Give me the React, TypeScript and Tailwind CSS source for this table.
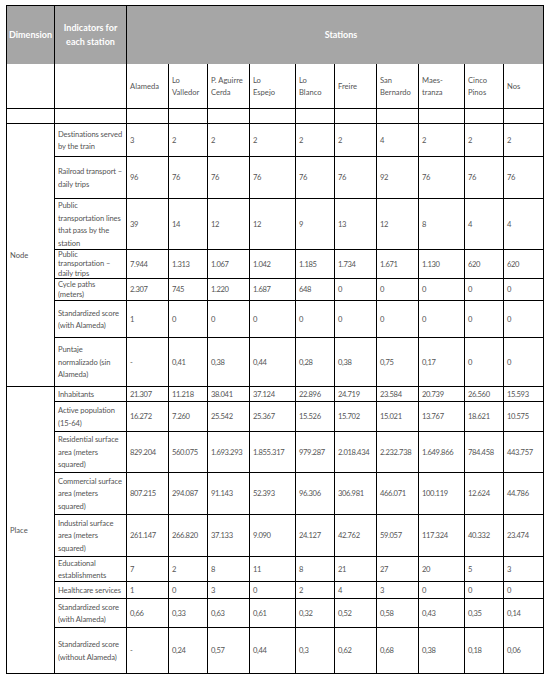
import clsx from 'clsx'
import type { ReactNode } from 'react'

const stations: string[][] = [
  ['Alameda'],
  ['Lo', 'Valledor'],
  ['P. Aguirre', 'Cerda'],
  ['Lo', 'Espejo'],
  ['Lo', 'Blanco'],
  ['Freire'],
  ['San', 'Bernardo'],
  ['Maes-', 'tranza'],
  ['Cinco', 'Pinos'],
  ['Nos'],
]

type Row = { label: string[]; values: string[]; tight?: boolean }

const nodeRows: Row[] = [
  { label: ['Destinations served', 'by the train'], values: ['3', '2', '2', '2', '2', '2', '4', '2', '2', '2'] },
  { label: ['Railroad transport –', 'daily trips'], values: ['96', '76', '76', '76', '76', '76', '92', '76', '76', '76'] },
  { label: ['Public', 'transportation lines', 'that pass by the', 'station'], values: ['39', '14', '12', '12', '9', '13', '12', '8', '4', '4'] },
  { label: ['Public', 'transportation –', 'daily trips'], values: ['7.944', '1.313', '1.067', '1.042', '1.185', '1.734', '1.671', '1.130', '620', '620'], tight: true },
  { label: ['Cycle paths', '(meters)'], values: ['2.307', '745', '1.220', '1.687', '648', '0', '0', '0', '0', '0'], tight: true },
  { label: ['Standardized score', '(with Alameda)'], values: ['1', '0', '0', '0', '0', '0', '0', '0', '0', '0'] },
  { label: ['Puntaje', 'normalizado (sin', 'Alameda)'], values: ['-', '0,41', '0,38', '0,44', '0,28', '0,38', '0,75', '0,17', '0', '0'] },
]

const placeRows: Row[] = [
  { label: ['Inhabitants'], values: ['21.307', '11.218', '38.041', '37.124', '22.896', '24.719', '23.584', '20.739', '26.560', '15.593'] },
  { label: ['Active population', '(15-64)'], values: ['16.272', '7.260', '25.542', '25.367', '15.526', '15.702', '15.021', '13.767', '18.621', '10.575'] },
  { label: ['Residential surface', 'area (meters', 'squared)'], values: ['829.204', '560.075', '1.693.293', '1.855.317', '979.287', '2.018.434', '2.232.738', '1.649.866', '784.458', '443.757'] },
  { label: ['Commercial surface', 'area (meters', 'squared)'], values: ['807.215', '294.087', '91.143', '52.393', '96.306', '306.981', '466.071', '100.119', '12.624', '44.786'] },
  { label: ['Industrial surface', 'area (meters', 'squared)'], values: ['261.147', '266.820', '37.133', '9.090', '24.127', '42.762', '59.057', '117.324', '40.332', '23.474'] },
  { label: ['Educational', 'establishments'], values: ['7', '2', '8', '11', '8', '21', '27', '20', '5', '3'] },
  { label: ['Healthcare services'], values: ['1', '0', '3', '0', '2', '4', '3', '0', '0', '0'] },
  { label: ['Standardized score', '(with Alameda)'], values: ['0,66', '0,33', '0,63', '0,61', '0,32', '0,52', '0,58', '0,43', '0,35', '0,14'] },
  { label: ['Standardized score', '(without Alameda)'], values: ['-', '0,24', '0,57', '0,44', '0,3', '0,62', '0,68', '0,38', '0,18', '0,06'] },
]

function Cell({ children, className }: { children?: ReactNode; className?: string }) {
  return (
    <div className={clsx('flex items-center border-r border-b border-black px-[3px]', className)}>
      {children}
    </div>
  )
}

function Lines({ lines }: { lines: string[] }) {
  return (
    <div>
      {lines.map((l) => (
        <div key={l} className="whitespace-nowrap">{l}</div>
      ))}
    </div>
  )
}

function DataRow({ row }: { row: Row }) {
  return (
    <>
      <Cell className={clsx('tracking-[-0.1px]', row.tight && 'leading-[9.6px]')}>
        <Lines lines={row.label} />
      </Cell>
      {row.values.map((v, i) => (
        <Cell key={i} className="tracking-[-0.35px]">{v}</Cell>
      ))}
    </>
  )
}

export default function App() {
  return (
    <div className="min-h-screen bg-white pt-[5px] pl-[6px] font-['Lato',sans-serif] text-[7.6px] leading-[12.5px] text-[#555]">
      <div className="grid w-[538px] grid-cols-[48px_72px_42px_39px_42px_46px_39px_42px_42px_46px_39px_40px] grid-rows-[58px_45px_15px_33px_42px_51px_29px_22px_37px_49px_15px_30px_41px_42px_42px_25px_17px_29px_46px] border-l border-t border-black">
        {/* header */}
        <div className="flex items-center justify-center border-r border-black bg-[#a6a6a6] text-[9px] font-bold leading-[14px] text-white">
          Dimension
        </div>
        <div className="flex items-center justify-center border-r border-black bg-[#a6a6a6] text-center text-[9px] font-bold leading-[14px] text-white">
          <div>
            Indicators for
            <br />
            each station
          </div>
        </div>
        <div className="col-span-10 flex items-center justify-center border-r border-black bg-[#a6a6a6] pl-[12px] text-[9px] font-bold text-white">
          Stations
        </div>

        {/* station names */}
        <Cell />
        <Cell />
        {stations.map((s) => (
          <Cell key={s.join(' ')}>
            <Lines lines={s} />
          </Cell>
        ))}

        {/* spacer row */}
        {Array.from({ length: 12 }).map((_, i) => (
          <Cell key={i} />
        ))}

        <Cell className="row-span-7 px-[2px]">Node</Cell>
        {nodeRows.map((r, i) => (
          <DataRow key={i} row={r} />
        ))}

        <Cell className="row-span-9 px-[2px]">Place</Cell>
        {placeRows.map((r, i) => (
          <DataRow key={i} row={r} />
        ))}
      </div>
    </div>
  )
}
